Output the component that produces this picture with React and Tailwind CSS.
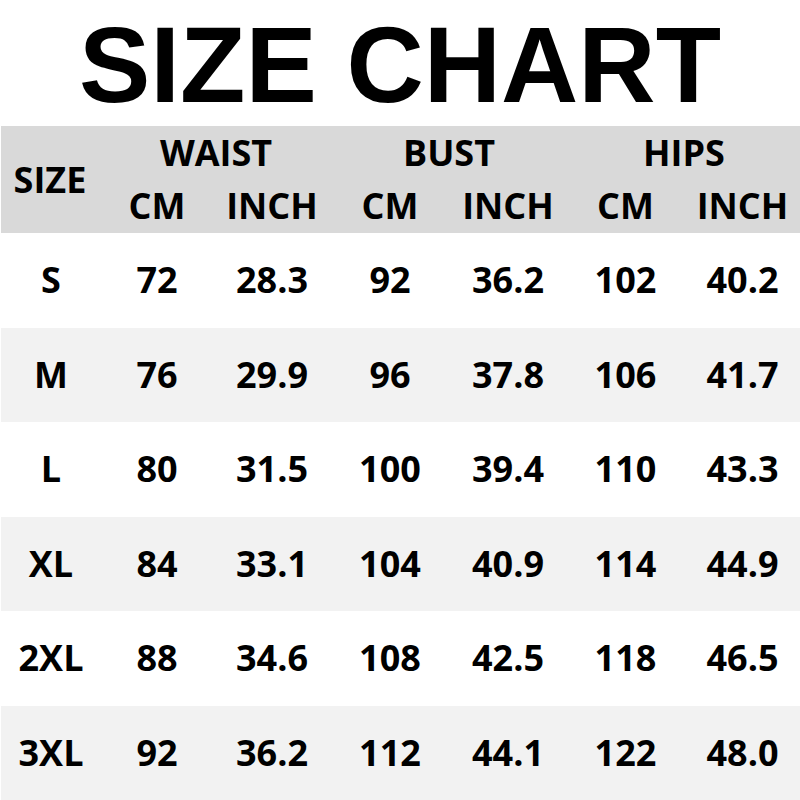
const rows = [
  ["S", "72", "28.3", "92", "36.2", "102", "40.2"],
  ["M", "76", "29.9", "96", "37.8", "106", "41.7"],
  ["L", "80", "31.5", "100", "39.4", "110", "43.3"],
  ["XL", "84", "33.1", "104", "40.9", "114", "44.9"],
  ["2XL", "88", "34.6", "108", "42.5", "118", "46.5"],
  ["3XL", "92", "36.2", "112", "44.1", "122", "48.0"],
];

const cols = "grid grid-cols-[100px_112px_118px_118px_118px_117px_117px]";

function App() {
  return (
    <div className="w-[800px] h-[800px] bg-white overflow-hidden text-black">
      <div
        className="h-[126px] flex items-center justify-center pt-[5px] font-bold text-[107px] leading-none"
        style={{ fontFamily: '"Liberation Sans", Arial, sans-serif' }}
      >
        SIZE CHART
      </div>

      <div style={{ fontFamily: '"Open Sans", "Noto Sans", sans-serif' }} className="font-bold text-[36px] leading-none">
        <div className={`${cols} grid-rows-[53px_54px] bg-[#d9d9d9] ml-[1px]`}>
          <div className="row-span-2 flex items-center justify-center pr-[2px]">SIZE</div>
          <div className="col-span-2 flex items-center justify-center pt-[1px]">WAIST</div>
          <div className="col-span-2 flex items-center justify-center pt-[1px]">BUST</div>
          <div className="col-span-2 flex items-center justify-center pt-[1px]">HIPS</div>
          <div className="flex items-center justify-center">CM</div>
          <div className="flex items-center justify-center">INCH</div>
          <div className="flex items-center justify-center">CM</div>
          <div className="flex items-center justify-center">INCH</div>
          <div className="flex items-center justify-center">CM</div>
          <div className="flex items-center justify-center">INCH</div>
        </div>

        {rows.map((r, i) => (
          <div
            key={r[0]}
            className={`${cols} h-[94.5px] ml-[1px] ${i % 2 === 1 ? "bg-[#f2f2f2]" : "bg-white"}`}
          >
            {r.map((v, j) => (
              <div key={j} className="flex items-center justify-center">
                {v}
              </div>
            ))}
          </div>
        ))}
      </div>
    </div>
  );
}

export default App;
